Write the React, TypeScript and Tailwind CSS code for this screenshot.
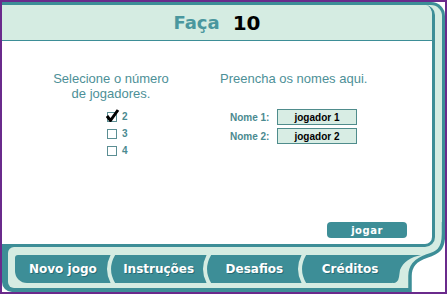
import React from 'react';

const tabs = ['Novo jogo', 'Instruções', 'Desafios', 'Créditos'];

function Separator() {
  return (
    <svg className="absolute -left-[6px] top-0" width="12" height="28" viewBox="0 0 12 28">
      <path d="M9,-2 Q-1,14 9,30" fill="none" stroke="#d5ece2" strokeWidth="4" />
    </svg>
  );
}

function Check() {
  return (
    <svg className="absolute -left-[3px] -top-[5px]" width="15" height="15" viewBox="0 0 15 15">
      <path d="M2,8 L5.5,12.5 L13,2" fill="none" stroke="#000" strokeWidth="3" strokeLinejoin="round" />
    </svg>
  );
}

function PlayerOption({ n, checked }: { n: number; checked?: boolean }) {
  return (
    <div className="flex h-[17px] items-center">
      <div className="relative h-[10px] w-[10px] border border-[#5b8e93] bg-white">{checked && <Check />}</div>
      <span className="ml-[5px] text-[10px] font-bold text-[#4b8a90]">{n}</span>
    </div>
  );
}

function NameRow({ label, value }: { label: string; value: string }) {
  return (
    <div className="flex h-[16px] items-center">
      <span className="w-[47px] text-[10px] font-bold text-[#4b8a90]">{label}</span>
      <div className="flex h-[16px] w-[80px] items-center justify-center border border-[#4f8c8c] bg-[#d8ede4] text-[10px] font-bold text-black">
        {value}
      </div>
    </div>
  );
}

export default function App() {
  return (
    <div className="relative h-[294px] w-[447px] overflow-hidden border-2 border-[#6a2a8c] bg-white font-['Liberation_Sans',Arial,sans-serif]">
      <div className="flex h-full flex-col">
        {/* top frame with main panel */}
        <div className="flex h-[245px] rounded-tr-[14px] border-t-[3px] border-r-[3px] border-[#3d8e97] bg-[#d5ece2] pr-[7px]">
          <div className="flex flex-1 flex-col overflow-hidden rounded-tr-[10px] rounded-br-[10px] border-r-[3px] border-b-[3px] border-[#3d8e97] bg-white">
            <div className="flex h-[36px] items-center justify-center border-b border-[#3d8e97] bg-[#d5ece2] font-['DejaVu_Sans',Verdana,sans-serif] font-bold">
              <span className="text-[18px] text-[#4a979e]">Faça</span>
              <span className="ml-[13px] text-[20px] text-black">10</span>
            </div>

            <div className="flex flex-1 flex-col">
              <div className="flex pt-[30px]">
                <div className="flex w-[218px] flex-col items-center">
                  <p className="text-center text-[13px] leading-[15px] text-[#4d9097]">
                    Selecione o número
                    <br />
                    de jogadores.
                  </p>
                  <div className="ml-[105px] mt-[7px] flex flex-col self-start">
                    <PlayerOption n={2} checked />
                    <PlayerOption n={3} />
                    <PlayerOption n={4} />
                  </div>
                </div>
                <div className="flex flex-col">
                  <p className="text-[13px] leading-[15px] text-[#4d9097]">Preencha os nomes aqui.</p>
                  <div className="ml-[10px] mt-[23px] flex flex-col gap-[3px]">
                    <NameRow label="Nome 1:" value="jogador 1" />
                    <NameRow label="Nome 2:" value="jogador 2" />
                  </div>
                </div>
              </div>

              <div className="mt-auto flex justify-end pb-[6px] pr-[25px]">
                <button className="flex h-[16px] w-[80px] items-center justify-center rounded-[4px] bg-[#3d8e97] font-['DejaVu_Sans',Verdana,sans-serif] text-[10px] font-bold tracking-[0.5px] text-white">
                  jogar
                </button>
              </div>
            </div>
          </div>
        </div>

        {/* tab bar */}
        <div className="flex-1 rounded-bl-[10px] bg-[#3d8e97] pb-[4px] pl-[6px]">
          <div className="h-full rounded-bl-[6px] rounded-tl-[6px] bg-[#d5ece2] pl-[7px] pt-[8px]">
            <div className="flex h-[28px] w-[383px]">
              {tabs.map((t, i) => (
                <div
                  key={t}
                  className={`relative flex flex-1 items-center justify-center bg-[#3d8e97] font-['DejaVu_Sans',Verdana,sans-serif] text-[12px] font-bold text-white [text-shadow:1px_1px_0_rgba(0,40,50,0.35)] ${
                    i === 0 ? 'rounded-bl-[12px] rounded-tl-[3px]' : ''
                  } ${i === 3 ? 'rounded-br-[6px]' : ''}`}
                >
                  {i > 0 && <Separator />}
                  <span className="relative">{t}</span>
                </div>
              ))}
            </div>
          </div>
        </div>
      </div>

      {/* curved bottom-right corner of the frame */}
      <svg className="absolute bottom-0 right-0" width="52" height="70" viewBox="0 0 52 70">
        <path d="M0,33 L28,33 C18,35 10,40 7,48 L6,55 Q5,61 0,61 Z" fill="#3d8e97" />
        <path d="M50.5,0 L50.5,12 C50.5,28 44,31 34,34 C22,38 17,44 17,54 L17,70 L52,70 L52,0 Z" fill="#fff" />
        <path d="M50.5,0 L50.5,12 C50.5,28 44,31 34,34 C22,38 17,44 17,54 L17,70" fill="none" stroke="#3d8e97" strokeWidth="3.5" />
      </svg>
    </div>
  );
}
